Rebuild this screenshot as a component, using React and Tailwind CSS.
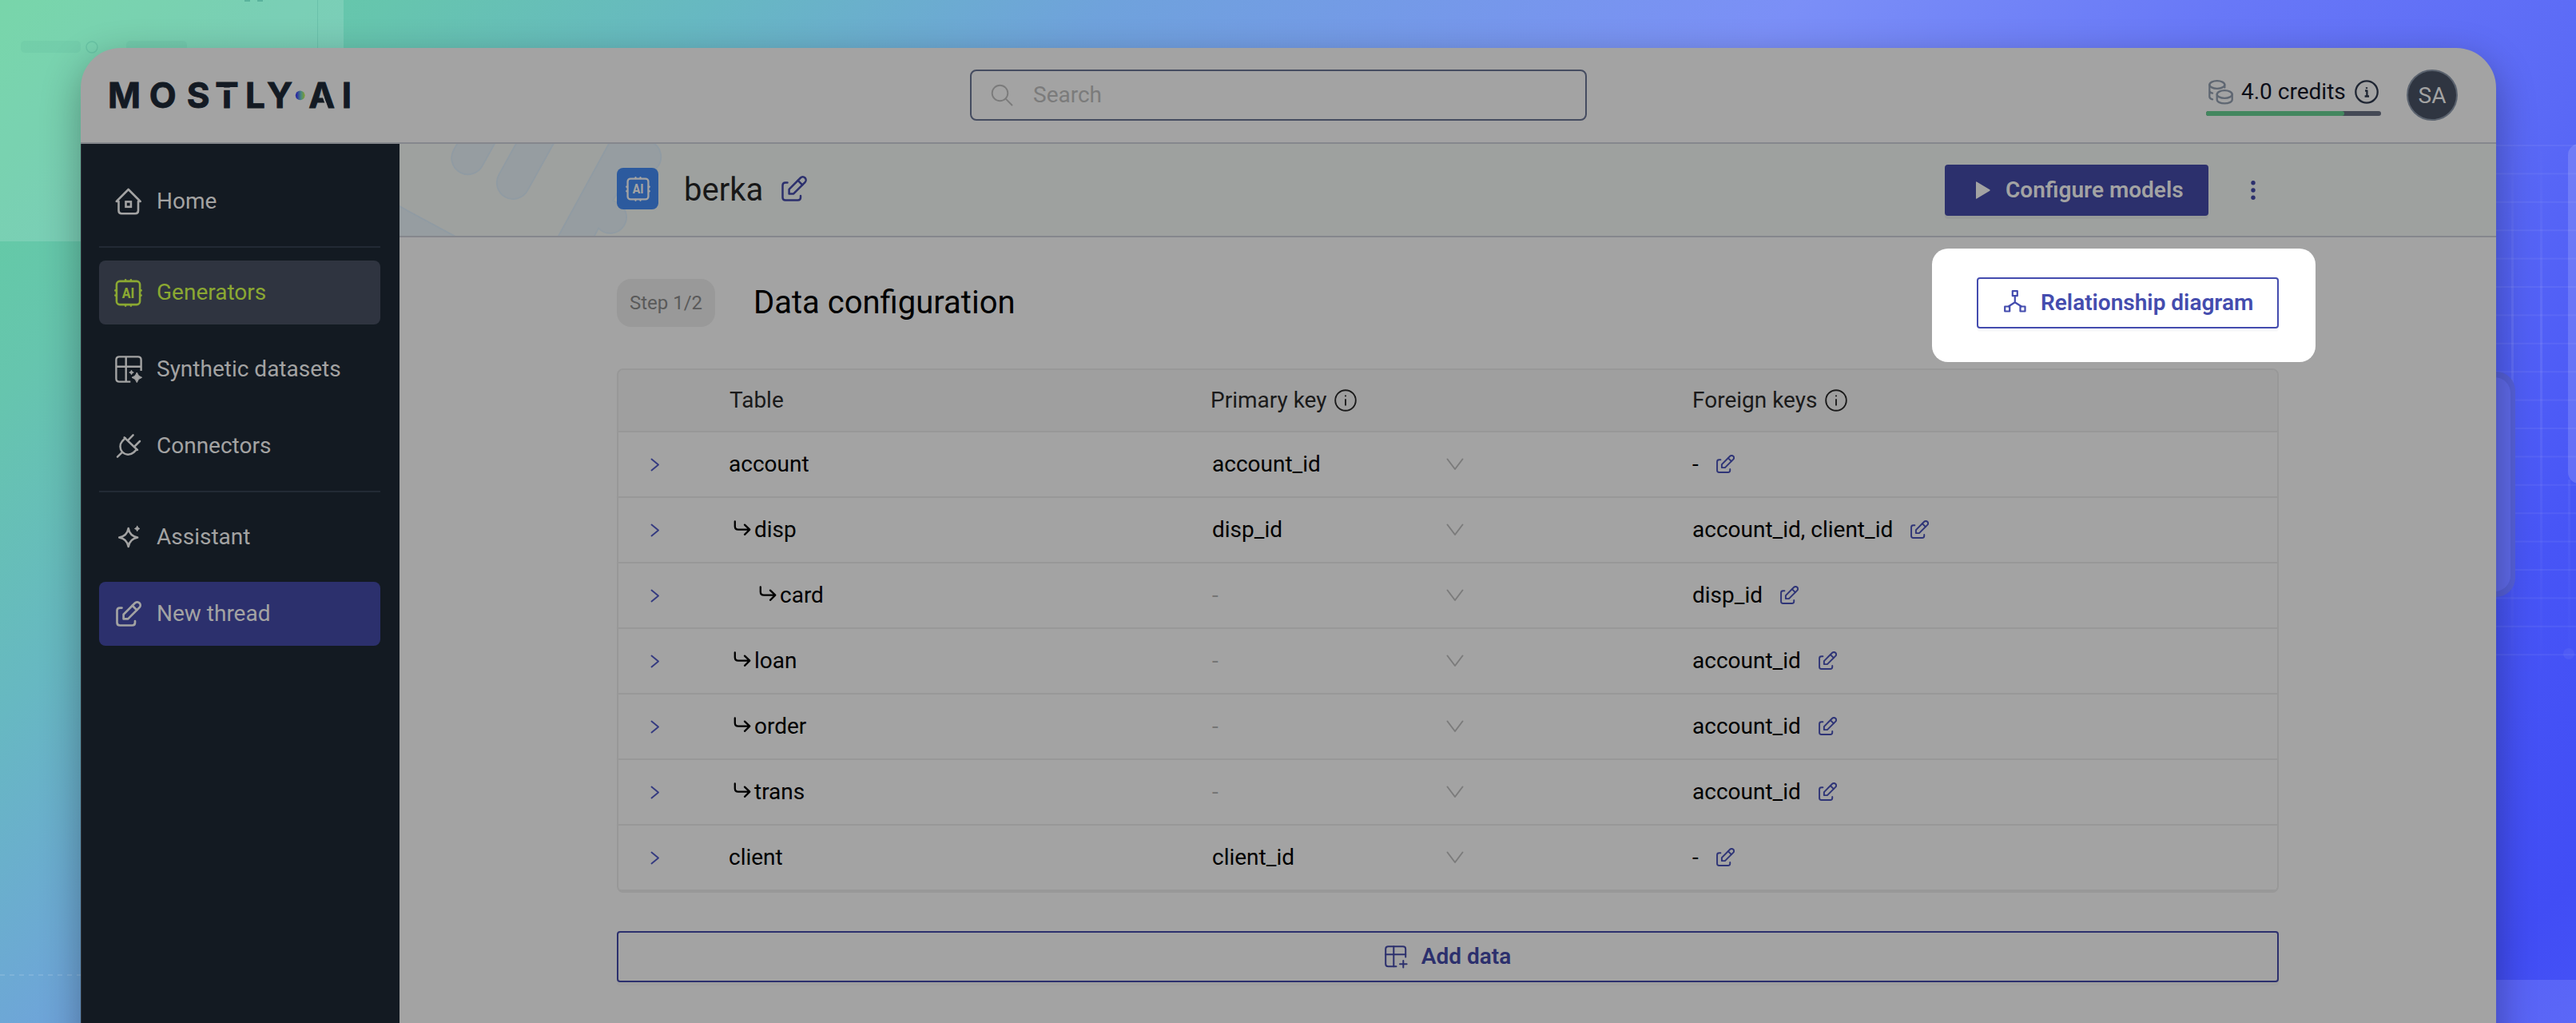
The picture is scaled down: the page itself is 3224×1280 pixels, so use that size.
const stroke = {
  fill: "none",
  stroke: "currentColor",
  strokeLinecap: "round",
  strokeLinejoin: "round",
};

function EditIcon({ size = 32, width = 2.7 }) {
  return (
    <svg width={size} height={size} viewBox="0 0 32 32" {...stroke} strokeWidth={width}>
      <path d="M7.5 8.6H5Q1.5 8.6 1.5 12.1V27Q1.5 30.5 5 30.5H20.5Q24 30.5 24 27V25" />
      <path d="M9.6 22.4V16.8L23.9 2.5a3.9 3.9 0 0 1 5.6 5.6L15.2 22.4Z" />
      <path d="M20.7 5.8L26.2 11.3" />
    </svg>
  );
}

function HomeIcon() {
  return (
    <svg width="34" height="34" viewBox="0 0 34 34" {...stroke} strokeWidth="2.6">
      <path d="M4.5 17H1.8L16.7 2L31.6 17H29V28.6Q29 32.3 25.3 32.3H8.2Q4.5 32.3 4.5 28.6Z" />
      <rect x="13.5" y="17.4" width="6.4" height="6.4" strokeLinejoin="miter" />
    </svg>
  );
}

function ChipIcon({ size = 35 }) {
  return (
    <svg width={size} height={size} viewBox="0 0 35 35" {...stroke} strokeWidth="2.6">
      <rect x="2.9" y="2.9" width="29.2" height="29.2" rx="4" />
      <path d="M14.1 1.4v1M20.9 1.4v1M14.1 32.6v1M20.9 32.6v1M1.4 14.4h1M1.4 20.6h1M32.6 14.4h1M32.6 20.6h1" />
      <text
        x="17.5"
        y="23.8"
        textAnchor="middle"
        textLength="15.5"
        lengthAdjust="spacingAndGlyphs"
        fill="currentColor"
        stroke="none"
        className="font-['Roboto',sans-serif] text-[18px] font-extrabold"
      >
        AI
      </text>
    </svg>
  );
}

function DatasetIcon() {
  return (
    <svg width="34" height="34" viewBox="0 0 34 34" {...stroke} strokeWidth="2.4" strokeLinecap="butt">
      <path d="M32.6 19V5.3Q32.6 1.4 28.7 1.4H5.3Q1.4 1.4 1.4 5.3V28.7Q1.4 32.6 5.3 32.6H19.3" />
      <path d="M13.7 1.4V32.6M1.4 13.7H32.6" />
      <path d="M27.3 21q1.2 5 6.3 6.3q-5.1 1.3-6.3 6.3q-1.2-5-6.3-6.3q5.1-1.3 6.3-6.3z" fill="currentColor" strokeWidth="1" />
      <path d="M20.5 18.2q.5 2.3 2.8 2.8q-2.3.5-2.8 2.8q-.5-2.3-2.8-2.8q2.3-.5 2.8-2.8z" fill="currentColor" strokeWidth=".8" />
    </svg>
  );
}

function PlugIcon() {
  return (
    <svg width="34" height="34" viewBox="0 0 34 34" {...stroke} strokeWidth="2.5">
      <path d="M11.6 6.3L28 22" />
      <path d="M12.8 7.2L9 11a10.3 10.3 0 0 0 0 13.5a10.3 10.3 0 0 0 14.3 .5L27 21.3" />
      <path d="M17 9.2L22.6 3.3M25 17L31 11M3 30.7L9.2 24.6" />
    </svg>
  );
}

function SparkleIcon() {
  return (
    <svg width="34" height="34" viewBox="0 0 34 34" {...stroke} strokeWidth="2.5">
      <path d="M16.7 6q1.6 9.7 11.5 11.5q-9.9 1.8-11.5 11.5q-1.6-9.7-11.5-11.5q9.9-1.8 11.5-11.5z" />
      <path d="M27.7 3.3q.6 2.6 3.2 3.2q-2.6.6-3.2 3.2q-.6-2.6-3.2-3.2q2.6-.6 3.2-3.2z" fill="currentColor" strokeWidth="1" />
    </svg>
  );
}

function TablePlusIcon() {
  return (
    <svg width="29" height="29" viewBox="0 0 29 29" {...stroke} strokeWidth="2">
      <path d="M26.2 14.5V4.5Q26.2 1.2 22.9 1.2H4.5Q1.2 1.2 1.2 4.5V22.9Q1.2 26.2 4.5 26.2H14.5" />
      <path d="M11.3 1.2V26.2M1.2 11.3H26.2M23.3 19V27.5M19 23.3H27.6" />
    </svg>
  );
}

function DiagramIcon() {
  return (
    <svg width="28" height="28" viewBox="0 0 28 28" {...stroke} strokeWidth="2.2">
      <rect x="10.8" y="1.2" width="6" height="6" />
      <rect x="1.2" y="20.5" width="6" height="6" />
      <rect x="20.5" y="20.5" width="6" height="6" />
      <path d="M13.8 7.2V15.3L6 20.3M13.8 15.3L21.6 20.3" />
    </svg>
  );
}

function CoinsIcon() {
  return (
    <svg width="31" height="31" viewBox="0 0 31 31" {...stroke} strokeWidth="2.3">
      <ellipse cx="10.8" cy="6" rx="9.5" ry="4.8" />
      <path d="M1.3 6V21Q1.3 23.3 5 24.3M1.3 14Q2.3 16 5 16.6M20.3 6V9.5" />
      <ellipse cx="20.2" cy="18" rx="9.5" ry="4.8" />
      <path d="M10.7 18V24.8C10.7 27.5 15 29.4 20.2 29.4S29.7 27.5 29.7 24.8V18" />
    </svg>
  );
}

function InfoIcon({ size, serif = false, width = 2 }) {
  return (
    <svg width={size} height={size} viewBox="0 0 30 30" {...stroke} strokeWidth={width}>
      <circle cx="15" cy="15" r="13.7" />
      {serif ? (
        <path d="M13 13.5H15.4V20M12.6 20.5H18M15 9.3V11" strokeLinecap="butt" />
      ) : (
        <path d="M15 13V22M15 8V10" strokeLinecap="butt" />
      )}
    </svg>
  );
}

function SearchIcon() {
  return (
    <svg width="28" height="28" viewBox="0 0 28 28" {...stroke} strokeWidth="1.9">
      <circle cx="11.5" cy="11.5" r="9.8" />
      <path d="M18.7 18.7L26.5 26.5" />
    </svg>
  );
}

function ReturnArrow() {
  return (
    <svg width="23" height="20" viewBox="0 0 23 20" {...stroke} strokeWidth="2.3" className="-mt-1">
      <path d="M1.8 1.5V7.5Q1.8 11.7 6 11.7H20M14 5.6L20.3 11.7L14 17.8" />
    </svg>
  );
}

function Logo() {
  const letter = "fill-[#131a23] font-['Inter',sans-serif] text-[44px] font-bold";
  return (
    <svg width="320" height="64" viewBox="-8 -14 320 64" className="ml-[27px]">
      <defs>
        <linearGradient id="dot">
          <stop offset="0.15" stopColor="#2c2fa0" />
          <stop offset="0.6" stopColor="#4a8a80" />
          <stop offset="1" stopColor="#7fa02c" />
        </linearGradient>
      </defs>
      <g textAnchor="middle" strokeWidth=".9" stroke="#131a23">
        <text x="19.5" y="34" className={letter}>M</text>
        <text x="67.8" y="34" className={letter}>O</text>
        <text x="112.2" y="34" className={letter}>S</text>
        <text x="148" y="34" className={letter}>T</text>
        <text x="183.5" y="34" className={letter}>L</text>
        <text x="214" y="34" className={letter}>Y</text>
        <text x="266.7" y="34" className={letter}>A</text>
        <text x="298" y="34" className={letter}>I</text>
      </g>
      <rect x="132" y="8.6" width="32" height="3.2" fill="#a3a3a3" />
      <path d="M268 18.5L274 35" stroke="#a3a3a3" strokeWidth="2" />
      <circle cx="239.7" cy="18.3" r="5.9" fill="url(#dot)" />
    </svg>
  );
}

function Backdrop() {
  const rows = Array.from({ length: 19 }, (_, i) => 181 + i * 35.4);
  return (
    <svg className="absolute inset-0" width="3224" height="1280" viewBox="0 0 3224 1280">
      <defs>
        <linearGradient id="fade" x1="0" y1="180" x2="0" y2="850" gradientUnits="userSpaceOnUse">
          <stop offset="0" stopColor="#fff" stopOpacity="0" />
          <stop offset=".35" stopColor="#fff" stopOpacity=".09" />
          <stop offset="1" stopColor="#fff" stopOpacity="0" />
        </linearGradient>
      </defs>
      <rect width="430" height="302" fill="#fff" opacity=".14" />
      <rect x="397" width="1" height="60" fill="#2d8a7c" opacity=".2" />
      <g fill="#2d8a7c" opacity=".07">
        <rect x="26" y="51" width="75" height="15" rx="5" />
        <rect x="158" y="51" width="76" height="15" rx="5" />
      </g>
      <g fill="#2d8a7c" opacity=".4">
        <rect x="306" y="0" width="7" height="2" />
        <rect x="322" y="0" width="7" height="2" />
      </g>
      <circle cx="115" cy="59" r="7" fill="none" stroke="#2d8a7c" strokeWidth="1.5" opacity=".2" />
      <path d="M0 1220H101" stroke="#fff" strokeWidth="2" strokeDasharray="6 6" opacity=".12" />
      {rows.map((y) => (
        <rect key={y} x="3124" y={y} width="100" height="2" fill="#fff" opacity=".06" />
      ))}
      <rect x="3143" y="180" width="3" height="670" fill="url(#fade)" />
      <rect x="3179" y="180" width="3" height="670" fill="url(#fade)" />
      <rect x="3214" y="600" width="3" height="220" fill="url(#fade)" />
      <rect x="3060" y="465" width="88" height="282" rx="24" fill="#5560d8" />
      <rect x="3060" y="472" width="82" height="268" rx="20" fill="#5f6aea" />
      <rect x="3214" y="180" width="60" height="425" rx="14" fill="#fff" opacity=".15" />
      <circle cx="3215" cy="818" r="7" fill="#fff" opacity=".05" />
      <rect x="3100" y="1226" width="124" height="54" fill="#fff" opacity=".12" />
    </svg>
  );
}

function NavItem({ icon, label, className = "text-[#a3a3a3]" }) {
  return (
    <div className={"flex h-20 items-center rounded-lg pl-[19px] text-[28px] " + className}>
      <span className="flex w-[35px] justify-center">{icon}</span>
      <span className="ml-[18px]">{label}</span>
    </div>
  );
}

const divider = <div className="my-4 h-0.5 bg-[#222a35]" />;

function Sidebar() {
  return (
    <aside className="w-[399px] shrink-0 border-l border-[#30353c] bg-[#131a22] pt-8 pr-6 pl-[22px]">
      <NavItem icon={<HomeIcon />} label="Home" />
      {divider}
      <NavItem icon={<ChipIcon />} label="Generators" className="bg-[#2f3440] text-[#8ba832]" />
      <div className="h-4" />
      <NavItem icon={<DatasetIcon />} label="Synthetic datasets" />
      <div className="h-4" />
      <NavItem icon={<PlugIcon />} label="Connectors" />
      {divider}
      <NavItem icon={<SparkleIcon />} label="Assistant" />
      <div className="h-4" />
      <NavItem icon={<EditIcon />} label="New thread" className="bg-[#2c306d] text-[#a3a3a3]" />
    </aside>
  );
}

function TopBar() {
  return (
    <header className="flex h-[120px] items-center border-b-2 border-[#85878d]">
      <Logo />
      <div className="ml-[766px] flex h-16 w-[772px] items-center rounded-lg border-2 border-[#454c60] pl-6 text-[28px] text-[#7b7b7b]">
        <SearchIcon />
        <span className="ml-[25px]">Search</span>
      </div>
      <div className="mt-[7px] ml-auto flex w-[219px] flex-col">
        <div className="flex h-[30px] items-center pl-[3px] text-[#5f6772]">
          <CoinsIcon />
          <span className="ml-[10px] text-[28px] leading-none text-[#0c0e18]">4.0 credits</span>
          <span className="ml-auto pr-[3px] text-[#1f2633]">
            <InfoIcon size={30} serif width={2.3} />
          </span>
        </div>
        <div className="mt-[9px] h-1.5 rounded-full bg-[#444955]">
          <div className="h-1.5 w-[173px] rounded-full bg-[#43875f]" />
        </div>
      </div>
      <div className="mr-12 ml-8 flex size-16 items-center justify-center rounded-full border-2 border-[#5a626e] bg-[#2f3541] pt-0.5 text-[28px] text-[#a3a3a3]">
        SA
      </div>
    </header>
  );
}

function HeaderArt() {
  return (
    <svg
      className="absolute top-0 left-0"
      width="360"
      height="115"
      viewBox="0 0 360 115"
      fill="#969da1"
      stroke="#909ba3"
      strokeWidth="1.8"
    >
      <rect x="-20.5" y="-200" width="41" height="220.5" rx="20.5" transform="translate(85.7 17.7) rotate(29)" />
      <rect x="-20.5" y="-200" width="41" height="220.5" rx="20.5" transform="translate(142.3 48.5) rotate(29)" />
      <path d="M263-2L198 117H243L249 105.5A20.3 20.3 0 1 0 272 73L267 71L273 61L321 31A20.5 20.5 0 0 0 316-2Z" />
      <path d="M-2 77L72 117H-2Z" />
    </svg>
  );
}

function TitleBar() {
  return (
    <div className="relative flex h-[117px] items-center border-b-2 border-[#85878d] bg-[#9ea19f] pr-[272px] pl-[272px]">
      <HeaderArt />
      <div className="relative -mt-[3px] flex size-[52px] items-center justify-center rounded-lg bg-[#2c5a9e] text-[#a3a3a3]">
        <ChipIcon size={31} />
      </div>
      <span className="ml-8 text-[40px] text-[#181818]">berka</span>
      <span className="-mt-1 ml-[23px] text-[#2c306d]">
        <EditIcon width={2.5} />
      </span>
      <div className="ml-auto flex h-16 w-[330px] items-center rounded bg-[#2c306d] pl-[39px] text-[28px] font-semibold text-[#a3a3a3] shadow-[0_4px_0_#979a99]">
        <svg width="18" height="22" viewBox="0 0 18 22" fill="currentColor">
          <path d="M0 .8Q0-.2 1 .5L17.3 10.3Q18 11 17.3 11.7L1 21.5Q0 22.2 0 21.2Z" />
        </svg>
        <span className="ml-[19px]">Configure models</span>
      </div>
      <svg width="6" height="26" viewBox="0 0 6 26" fill="#2c306d" className="mr-[29px] ml-[53px]">
        <circle cx="3" cy="3.7" r="2.7" />
        <circle cx="3" cy="13" r="2.7" />
        <circle cx="3" cy="22.3" r="2.7" />
      </svg>
    </div>
  );
}

const tables = [
  { name: "account", level: 0, pk: "account_id", fk: "-" },
  { name: "disp", level: 1, pk: "disp_id", fk: "account_id, client_id" },
  { name: "card", level: 2, pk: null, fk: "disp_id" },
  { name: "loan", level: 1, pk: null, fk: "account_id" },
  { name: "order", level: 1, pk: null, fk: "account_id" },
  { name: "trans", level: 1, pk: null, fk: "account_id" },
  { name: "client", level: 0, pk: "client_id", fk: "-" },
];

const indents = ["", "pl-1.5", "pl-[38px]"];
const columns = "grid grid-cols-[138px_604px_602px_1fr] items-center border-b-2 border-[#989898]";

function DataTable() {
  return (
    <div className="overflow-hidden rounded-lg border-2 border-[#989898] text-[28px] text-black">
      <div className={columns + " h-[78px] bg-[#9f9f9f] text-[#1a1a1a]"}>
        <span />
        <span className="pl-px">Table</span>
        <span className="-ml-px flex items-center gap-[9px]">
          Primary key <InfoIcon size={28} />
        </span>
        <span className="flex items-center gap-2.5">
          Foreign keys <InfoIcon size={28} />
        </span>
      </div>
      {tables.map((t) => (
        <div key={t.name} className={columns + " h-[82px]"}>
          <svg width="12" height="17" viewBox="0 0 12 17" {...stroke} strokeWidth="1.9" className="ml-10 text-[#343a80]">
            <path d="M1.5 1.5L10 8.5L1.5 15.5" />
          </svg>
          <span className={"flex items-center " + indents[t.level]}>
            {t.level > 0 && <ReturnArrow />}
            <span className={t.level > 0 ? "ml-[3px]" : ""}>{t.name}</span>
          </span>
          <span className="flex items-center">
            <span className={"w-[294px] pl-px " + (t.pk ? "" : "text-[#757575]")}>{t.pk ?? "-"}</span>
            <svg width="22" height="16" viewBox="0 0 22 16" {...stroke} strokeWidth="1.9" className="text-[#7b7b7b]">
              <path d="M1.5 1.5L11 14L20.5 1.5" />
            </svg>
          </span>
          <span className="flex items-center">
            {t.fk}
            <span className="-mt-0.5 ml-[22px] text-[#2f3577]">
              <EditIcon size={23} width={2.7} />
            </span>
          </span>
        </div>
      ))}
    </div>
  );
}

function Content() {
  return (
    <main className="px-[272px]">
      <div className="flex h-[164px] items-start justify-between pt-3.5">
        <div className="mt-[36px] flex h-16 items-center">
          <span className="flex h-[60px] w-[123px] items-center justify-center rounded-[18px] bg-[#999999] text-2xl text-[#5a5a5a]">
            Step 1/2
          </span>
          <h1 className="ml-12 text-[40px] text-black">Data configuration</h1>
        </div>
        <div className="-mr-[46px] h-[142px] w-[480px] rounded-[20px] bg-white pt-9 pr-[46px] pl-14">
          <div className="flex h-16 items-center rounded border-2 border-[#444cae] pl-8 text-[28px] font-semibold text-[#444cae] shadow-[0_4px_0_#fafafa]">
            <span className="-mt-1">
              <DiagramIcon />
            </span>
            <span className="ml-[18px]">Relationship diagram</span>
          </div>
        </div>
      </div>
      <DataTable />
      <div className="mt-12 flex h-16 items-center justify-center gap-[17px] rounded border-2 border-[#2c306d] text-[28px] font-semibold text-[#2c306d] shadow-[0_4px_0_#9f9f9f]">
        <TablePlusIcon />
        <span>Add data</span>
      </div>
    </main>
  );
}

export default function App() {
  return (
    <div className="relative flex h-[1280px] w-[3224px] justify-start overflow-hidden bg-[linear-gradient(135deg,#62cf9d_0%,#66c5ae_11%,#67b8c2_20%,#6fa2dc_31%,#7b8ff7_50%,#6878f7_62%,#5a69f6_74%,#4755f6_86%,#414df5_96%,#4552f6_100%)] font-['Roboto',sans-serif] whitespace-nowrap">
      <Backdrop />
      <div className="relative mt-[60px] ml-[101px] h-[1300px] w-[3023px] shrink-0 overflow-hidden rounded-[50px] bg-[#a3a3a3] shadow-[0_16px_50px_rgba(0,0,0,0.32)]">
        <TopBar />
        <div className="flex h-full">
          <Sidebar />
          <div className="min-w-0 flex-1">
            <TitleBar />
            <Content />
          </div>
        </div>
      </div>
    </div>
  );
}
